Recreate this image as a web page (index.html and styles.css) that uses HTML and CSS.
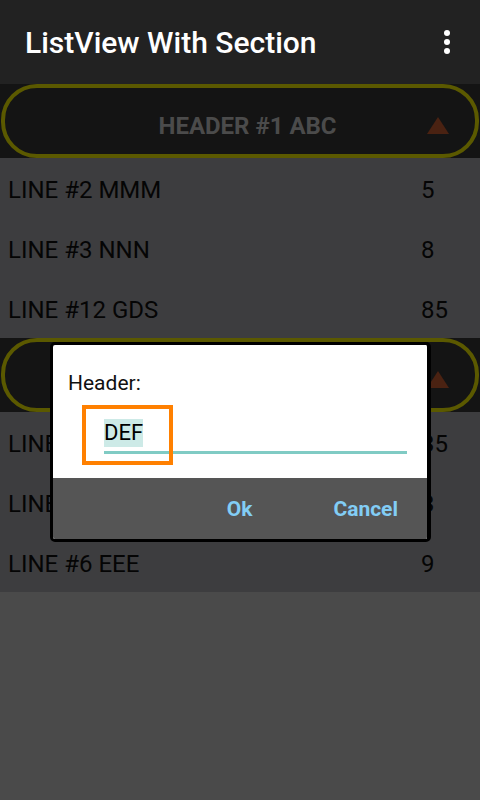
FILE: index.html
```html
<!DOCTYPE html>
<html>
<head>
<meta charset="utf-8">
<link rel="stylesheet" href="styles.css">
</head>
<body>
<div class="screen">
  <header class="appbar">
    <div class="title">ListView With Section</div>
    <svg class="overflow" width="6" height="24" viewBox="0 0 6 24"><circle cx="3" cy="3" r="3" fill="#fff"/><circle cx="3" cy="12" r="3" fill="#fff"/><circle cx="3" cy="21" r="3" fill="#fff"/></svg>
  </header>
  <div class="list">
    <div class="section-header"><div class="pill"><span class="section-title">HEADER #1 ABC</span><span class="tri"></span></div></div>
    <div class="row"><span class="label">LINE #2 MMM</span><span class="num">5</span></div>
    <div class="row"><span class="label">LINE #3 NNN</span><span class="num">8</span></div>
    <div class="row"><span class="label">LINE #12 GDS</span><span class="num">85</span></div>
    <div class="section-header"><div class="pill"><span class="section-title">HEADER #2 DEF</span><span class="tri"></span></div></div>
    <div class="row"><span class="label">LINE #4 DDD</span><span class="num">35</span></div>
    <div class="row"><span class="label">LINE #5 FFF</span><span class="num">3</span></div>
    <div class="row"><span class="label">LINE #6 EEE</span><span class="num">9</span></div>
  </div>

  <div class="dialog">
    <div class="dialog-body">
      <div class="dialog-label">Header:</div>
      <div class="field"><span class="sel">DEF</span></div>
    </div>
    <div class="dialog-actions">
      <span class="btn">Ok</span>
      <span class="btn">Cancel</span>
    </div>
  </div>
  <div class="mark"></div>
</div>
</body>
</html>
```
FILE: styles.css
```css
* { box-sizing: border-box; }
html, body { margin: 0; padding: 0; }
body {
  width: 480px;
  height: 800px;
  background: #4a4a4a;
  font-family: Roboto, "Liberation Sans", sans-serif;
  overflow: hidden;
}
.screen { position: relative; width: 480px; height: 800px; }
.appbar {
  height: 84px;
  background: #222222;
  display: flex;
  align-items: center;
  justify-content: space-between;
  padding: 0 30px 0 25px;
}
.title {
  color: #ffffff;
  font-size: 30px;
  font-weight: 500;
}
.overflow { display: block; }
.section-header {
  height: 74px;
  background: #141414;
  padding: 0 1px 0 1px;
}
.pill {
  height: 100%;
  border: 4px solid #5b5900;
  border-radius: 36px;
  display: flex;
  align-items: center;
  padding: 9px 26px 0 63px;
}
.section-title {
  flex: 1;
  text-align: center;
  color: #4b4b4b;
  font-size: 24px;
  font-weight: 700;
}
.tri {
  width: 0;
  height: 0;
  border-left: 11.5px solid transparent;
  border-right: 11.5px solid transparent;
  border-bottom: 17px solid #4a2212;
}
.row {
  height: 60px;
  background: #3d3d3f;
  display: flex;
  align-items: center;
  padding: 3px 0 0 8px;
  color: #050505;
  font-size: 24px;
}
.label { flex: 1; }
.num { width: 59px; }
.dialog {
  position: absolute;
  left: 50px;
  top: 342px;
  width: 381px;
  border: 3px solid #000;
  border-right-width: 4px;
  border-radius: 5px;
  background: #ffffff;
  overflow: hidden;
}
.dialog-body {
  height: 133px;
  padding: 26px 0 0 15px;
}
.dialog-label {
  font-size: 21px;
  line-height: 24px;
  color: #111;
}
.field {
  margin: 24px 20px 0 36px;
  padding-bottom: 4px;
  border-bottom: 3px solid #80cbc4;
  height: 35px;
}
.sel {
  display: inline-block;
  height: 28px;
  line-height: 28px;
  font-size: 22px;
  color: #000;
  background: #cdeae7;
}
.dialog-actions {
  height: 61px;
  background: #555555;
  display: flex;
  justify-content: flex-end;
  align-items: center;
  gap: 81px;
  padding-right: 29px;
}
.btn {
  color: #82cdf5;
  font-size: 21px;
  font-weight: 700;
}
.mark {
  position: absolute;
  left: 82px;
  top: 405px;
  width: 91px;
  height: 60px;
  border: 4px solid #ff8000;
}
```
